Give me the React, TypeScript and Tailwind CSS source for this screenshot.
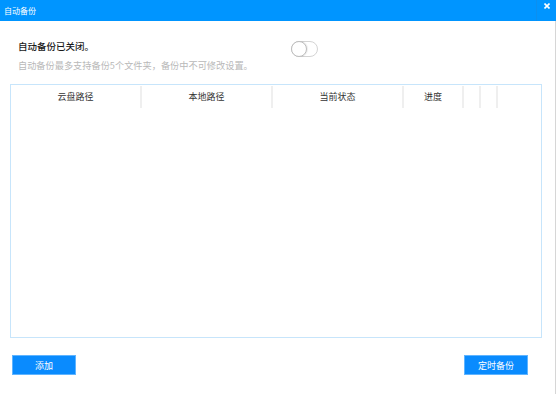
import React from 'react';

const cols = [
  { label: '云盘路径', w: 'w-[131px]' },
  { label: '本地路径', w: 'w-[131px]' },
  { label: '当前状态', w: 'w-[131px]' },
  { label: '进度', w: 'w-[60px]' },
  { label: '', w: 'w-[17px]' },
  { label: '', w: 'w-[17px]' },
];

const App: React.FC = () => {
  return (
    <div className="w-[556px] h-[394px] bg-white flex flex-col overflow-hidden font-['Microsoft_YaHei','Noto_Sans_CJK_SC',sans-serif]">
      {/* title bar */}
      <div className="h-[21px] bg-[#0095ff] flex items-center text-white relative">
        <span className="pl-[4px] text-[8px] leading-none">自动备份</span>
        <div className="absolute left-[536px] top-0 h-[21px] w-px bg-[#1d86d6]/40" />
        <svg className="absolute left-[544px] top-[3px]" width="6" height="6" viewBox="0 0 6 6">
          <path d="M0.5 0.5 L5.5 5.5 M5.5 0.5 L0.5 5.5" stroke="white" strokeWidth="1.6" />
        </svg>
      </div>

      <div className="flex-1 flex flex-col border-r border-[#d6d6d6]">
        {/* status */}
        <div className="flex pl-[18px] pt-[18px] h-[63px]">
          <div className="w-[273px]">
            <p className="text-[9.5px] font-medium text-[#1a1a1a] leading-[14px]">自动备份已关闭。</p>
            <p className="text-[9.2px] text-[#b8b8b8] leading-[14px] mt-[5px] whitespace-nowrap">自动备份最多支持备份5个文件夹，备份中不可修改设置。</p>
          </div>
          <div className="mt-[2px] w-[27px] h-[16px] rounded-full border border-[#d4d4d4] relative">
            <div className="absolute left-[-1px] top-[-1px] w-[16px] h-[16px] rounded-full border border-[#bdbdbd] bg-white shadow-[1px_0_1px_rgba(0,0,0,0.08)]" />
          </div>
        </div>

        {/* table */}
        <div className="ml-[10px] w-[532px] h-[254px] border border-[#c7e5fb]">
          <div className="flex h-[23px] items-stretch">
            {cols.map((c, i) => (
              <div key={i} className={`${c.w} flex items-center justify-center border-r-2 border-[#efefef] text-[#333] text-[9px] mt-[1px]`}>
                {c.label}
              </div>
            ))}
            <div className="flex-1" />
          </div>
        </div>

        {/* buttons */}
        <div className="flex justify-between pl-[12px] pr-[27px] mt-[17px]">
          <button className="w-[64px] h-[20px] bg-[#0a8bfe] border border-[#5fb4ff] text-white text-[9px] leading-none">添加</button>
          <button className="w-[64px] h-[20px] bg-[#0a8bfe] border border-[#5fb4ff] text-white text-[9px] leading-none">定时备份</button>
        </div>
      </div>
    </div>
  );
};

export default App;
